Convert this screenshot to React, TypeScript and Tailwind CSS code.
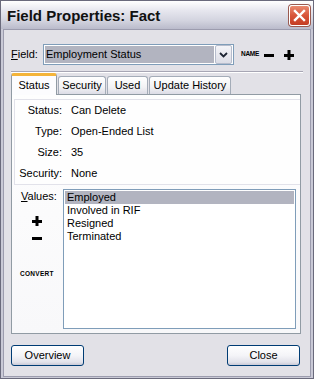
import React, { useState } from "react";

const tabs = ["Status", "Security", "Used", "Update History"];
const tabWidths: Record<string, string> = {
  Status: "w-[46px]",
  Security: "w-[48px]",
  Used: "w-[41px]",
  "Update History": "w-[82px]",
};

const props = [
  { label: "Status:", value: "Can Delete" },
  { label: "Type:", value: "Open-Ended List" },
  { label: "Size:", value: "35" },
  { label: "Security:", value: "None" },
];

const values = ["Employed", "Involved in RIF", "Resigned", "Terminated"];

const Minus = () => (
  <svg width="10" height="10" viewBox="0 0 10 10">
    <rect x="0" y="4" width="10" height="3" fill="#000" />
  </svg>
);

const Plus = () => (
  <svg width="10" height="10" viewBox="0 0 10 10">
    <rect x="0" y="4" width="10" height="3" fill="#000" />
    <rect x="3.5" y="0" width="3" height="10" fill="#000" />
  </svg>
);

const XpButton = ({ label }: { label: string }) => (
  <button className="w-[73px] h-[21px] rounded-[3px] border border-[#003c74] bg-[linear-gradient(to_bottom,#ffffff,#f4f4f8_50%,#e2e2ea_85%,#c9c9d6)] text-[11px] leading-none text-black">
    {label}
  </button>
);

export default function App() {
  const [activeTab, setActiveTab] = useState("Status");
  const [selected, setSelected] = useState("Employed");

  return (
    <div className="w-[314px] h-[379px] border border-[#6a6a7c] bg-[#c4c4d2] flex flex-col font-['Liberation_Sans',Arial,sans-serif] text-[11px] text-black">
      {/* Title bar */}
      <div className="h-[28px] shrink-0 flex items-center justify-between pl-[6px] pr-[3px] bg-[linear-gradient(to_bottom,#ffffff,#e6e6ee_35%,#d3d4df_70%,#babbcb)]">
        <span className="text-[15px] font-bold leading-none pt-[1px] text-[#111]">Field Properties: Fact</span>
        <button className="w-[21px] h-[21px] rounded-[3px] border border-white bg-[linear-gradient(to_bottom,#e98a70,#d8553a_50%,#c43c22)] shadow-[0_0_0_1px_#9a5a50] flex items-center justify-center">
          <svg width="13" height="13" viewBox="0 0 13 13">
            <path d="M2 2 L11 11 M11 2 L2 11" stroke="#fff" strokeWidth="2.4" strokeLinecap="square" />
          </svg>
        </button>
      </div>

      {/* Body */}
      <div className="flex-1 flex flex-col border-x-[2px] border-b-[1px] border-[#c9c9d6]">
        <div className="flex-1 flex flex-col bg-[#e2e1e7] border border-[#9c9cae]">
          {/* Field row */}
          <div className="mt-[14px] h-[21px] flex items-center pl-[7px]">
            <span className="w-[32px]">
              <span className="underline">F</span>ield:
            </span>
            <div className="w-[191px] h-[21px] border border-[#7f9db9] bg-white flex items-center p-[1px]">
              <div className="flex-1 h-full bg-[#b2b4c0] flex items-center pl-[1px] mr-[1px]">Employment Status</div>
              <div className="w-[17px] h-[19px] border border-[#b6bccc] rounded-[2px] bg-[linear-gradient(to_bottom,#f4f4f8,#dcdde6)] flex items-center justify-center">
                <svg width="9" height="6" viewBox="0 0 9 6">
                  <path d="M1 1 L4.5 4.5 L8 1" stroke="#1d2433" strokeWidth="1.8" fill="none" />
                </svg>
              </div>
            </div>
            <span className="ml-[7px] w-[17px] text-[6.5px] font-bold leading-none tracking-[-0.3px]">NAME</span>
            <span className="ml-[6px] flex">
              <Minus />
            </span>
            <span className="ml-[10px] flex">
              <Plus />
            </span>
          </div>

          {/* Separator */}
          <div className="mt-[6px] ml-[7px] w-[292px] h-[2px] border-t border-[#a7a6b4] border-b border-b-white" />

          {/* Tabs */}
          <div className="ml-[7px] h-[21px] flex items-end gap-[1px] relative z-10">
            {tabs.map((t) =>
              t === activeTab ? (
                <div
                  key={t}
                  onClick={() => setActiveTab(t)}
                  className={`${tabWidths[t]} h-[22px] -mb-[1px] bg-[#fcfcfe] border-x border-[#919ba4] border-t-[3px] border-t-[#f4b43a] rounded-t-[3px] flex items-center justify-center pb-[1px]`}
                >
                  {t}
                </div>
              ) : (
                <div
                  key={t}
                  onClick={() => setActiveTab(t)}
                  className={`${tabWidths[t]} h-[18px] border-x border-t border-[#a4acb8] rounded-t-[3px] bg-[linear-gradient(to_bottom,#ffffff,#f2f2f4_60%,#dcdce6)] flex items-center justify-center`}
                >
                  {t}
                </div>
              )
            )}
          </div>

          {/* Tab panel */}
          <div className="ml-[7px] w-[290px] h-[240px] border border-[#919ba4] bg-[linear-gradient(to_bottom,#fefefe,#f8f8fa)] flex flex-col">
            <div className="ml-[2px] mt-[4px] h-[86px] border-l border-t border-b border-[#e2e2ea] bg-[#fefefe]">
              {props.map((p) => (
                <div key={p.label} className="h-[21px] flex items-center">
                  <span className="w-[47px] text-right">{p.label}</span>
                  <span className="ml-[9px]">{p.value}</span>
                </div>
              ))}
            </div>

            <div className="flex mt-[4px]">
              <div className="w-[51px] flex flex-col items-start">
                <span className="ml-[9px] mt-[1px] h-[13px] leading-[13px]">
                  <span className="underline">V</span>alues:
                </span>
                <span className="ml-[20px] mt-[13px] flex">
                  <Plus />
                </span>
                <span className="ml-[20px] mt-[7px] flex">
                  <Minus />
                </span>
                <span className="ml-[8px] mt-[28px] text-[6.5px] font-bold leading-none tracking-[0.3px]">CONVERT</span>
              </div>
              <div className="w-[233px] h-[140px] border border-[#7f9db9] bg-white p-[1px]">
                {values.map((v) => (
                  <div
                    key={v}
                    onClick={() => setSelected(v)}
                    className={`h-[13px] leading-[13px] pl-[2px] ${v === selected ? "bg-[#b2b4c0]" : ""}`}
                  >
                    {v}
                  </div>
                ))}
              </div>
            </div>
          </div>

          {/* Footer buttons */}
          <div className="mt-[11px] flex justify-between pl-[7px] pr-[10px]">
            <XpButton label="Overview" />
            <XpButton label="Close" />
          </div>
        </div>
      </div>
    </div>
  );
}
